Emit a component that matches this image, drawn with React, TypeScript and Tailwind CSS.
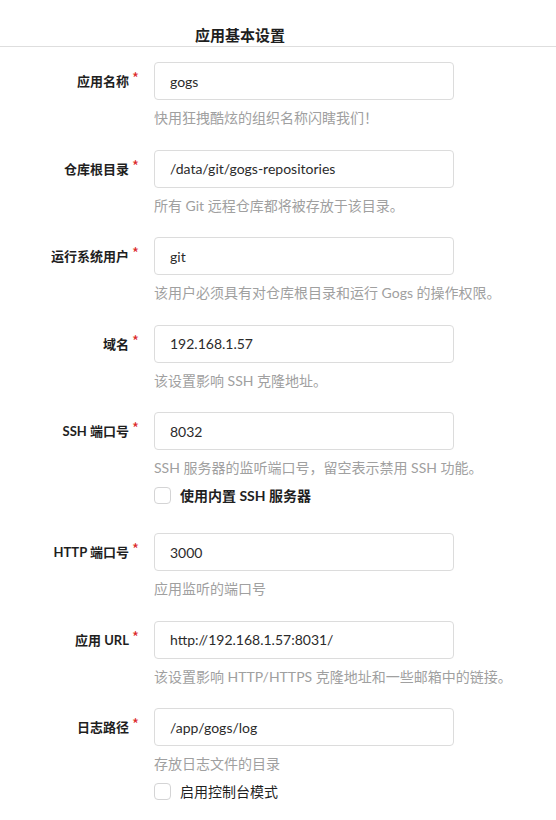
import React from "react";

type Field = {
  label: string;
  value: string;
  help: string;
  checkbox?: { text: string; bold: boolean };
};

const fields: Field[] = [
  { label: "应用名称", value: "gogs", help: "快用狂拽酷炫的组织名称闪瞎我们！" },
  { label: "仓库根目录", value: "/data/git/gogs-repositories", help: "所有 Git 远程仓库都将被存放于该目录。" },
  { label: "运行系统用户", value: "git", help: "该用户必须具有对仓库根目录和运行 Gogs 的操作权限。" },
  { label: "域名", value: "192.168.1.57", help: "该设置影响 SSH 克隆地址。" },
  {
    label: "SSH 端口号",
    value: "8032",
    help: "SSH 服务器的监听端口号，留空表示禁用 SSH 功能。",
    checkbox: { text: "使用内置 SSH 服务器", bold: true },
  },
  { label: "HTTP 端口号", value: "3000", help: "应用监听的端口号" },
  { label: "应用 URL", value: "http://192.168.1.57:8031/", help: "该设置影响 HTTP/HTTPS 克隆地址和一些邮箱中的链接。" },
  {
    label: "日志路径",
    value: "/app/gogs/log",
    help: "存放日志文件的目录",
    checkbox: { text: "启用控制台模式", bold: false },
  },
];

function FieldRow({ f }: { f: Field }) {
  return (
    <div className={f.checkbox ? "mb-[27.5px]" : "mb-[21.5px]"}>
      <div className="flex items-center h-[38px]">
        <div className="w-[139px] shrink-0 flex justify-end items-start text-[13px] font-bold text-[#1f1f1f] leading-[18px] whitespace-nowrap">
          <span>{f.label}</span>
          <span className="text-[#db2828] text-[15px] leading-[15px] font-normal ml-[3px] mt-[-2px] font-['Noto_Sans_CJK_SC']">
            *
          </span>
        </div>
        <div className="ml-[15px] w-[300px] h-[38px] border border-[#dcdcdc] rounded-[4px] bg-white flex items-center pl-[15px] text-[14px] text-[#2b2b2b]">
          {f.value}
        </div>
      </div>
      <div className="ml-[154px] mt-[8px] leading-[20px] text-[14px] text-[#a0a0a0] whitespace-nowrap">
        {f.help}
      </div>
      {f.checkbox && (
        <div className="ml-[154px] mt-[7.5px] h-[20px] flex items-center">
          <div className="w-[17px] h-[17px] border border-[#d4d4d5] rounded-[4px] bg-white" />
          <span
            className={
              "ml-[9px] text-[14px] text-[#1f1f1f] whitespace-nowrap " +
              (f.checkbox.bold ? "font-bold" : "font-normal")
            }
          >
            {f.checkbox.text}
          </span>
        </div>
      )}
    </div>
  );
}

export default function App() {
  return (
    <div
      className="w-[556px] min-h-[820px] bg-white overflow-hidden"
      style={{ fontFamily: 'Lato, "Noto Sans CJK SC", "Noto Sans", sans-serif' }}
    >
      <div className="pt-[26px] pb-[2px] border-b border-[#dedede]">
        <div className="pl-[195px] text-[15px] font-bold leading-[18px] text-[#1f1f1f]">应用基本设置</div>
      </div>
      <div className="pt-[15px]">
        {fields.map((f) => (
          <FieldRow key={f.label} f={f} />
        ))}
      </div>
    </div>
  );
}
